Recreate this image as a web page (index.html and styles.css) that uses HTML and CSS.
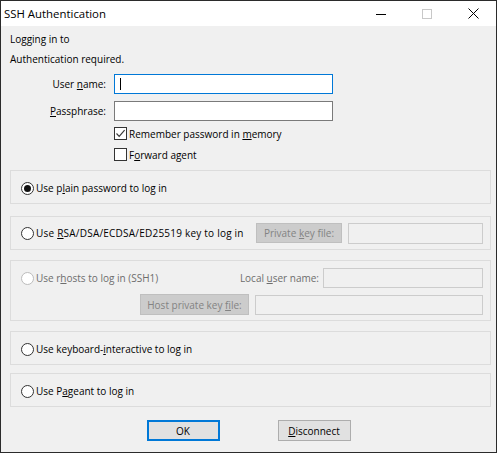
FILE: index.html
```html
<!DOCTYPE html>
<html>
<head>
<meta charset="utf-8">
<link rel="stylesheet" href="styles.css">
</head>
<body>
<div class="window">
  <div class="titlebar">
    <span class="title">SSH Authentication</span>
    <div class="ctl"><svg width="10" height="10" viewBox="0 0 10 10"><path d="M0 5.5H10" stroke="#000" stroke-width="1"/></svg></div>
    <div class="ctl"><svg width="10" height="10" viewBox="0 0 10 10"><rect x="0.5" y="0.5" width="9" height="9" fill="none" stroke="#c8c8c8" stroke-width="1"/></svg></div>
    <div class="ctl"><svg width="11" height="11" viewBox="0 0 11 11"><path d="M0.5 0.5L10.5 10.5M10.5 0.5L0.5 10.5" stroke="#000" stroke-width="1"/></svg></div>
  </div>
  <div class="content">
    <div class="line">Logging in to</div>
    <div class="line line2">Authentication required.</div>
    <div class="field field1">
      <span class="flabel">User <u>n</u>ame:</span>
      <div class="input focus"><span class="caret"></span></div>
    </div>
    <div class="field field2">
      <span class="flabel"><u>P</u>assphrase:</span>
      <div class="input"></div>
    </div>
    <div class="check check1">
      <span class="cb"><svg width="11" height="11" viewBox="0 0 11 11"><path d="M1.5 5.5L4.2 8.3L9.6 2.2" fill="none" stroke="#3a3a3a" stroke-width="1.2"/></svg></span><span class="clabel">Remember password in <u>m</u>emory</span>
    </div>
    <div class="check check2">
      <span class="cb"></span><span class="clabel">F<u>o</u>rward agent</span>
    </div>

    <div class="group g1">
      <div class="row"><span class="radio on"></span><span class="rlabel">Use p<u>l</u>ain password to log in</span></div>
    </div>

    <div class="group g2">
      <div class="row">
        <span class="radio"></span><span class="rlabel grow wide">Use <u>R</u>SA/DSA/ECDSA/ED25519 key to log in</span>
        <div class="dbtn w86"><span>Private <u>k</u>ey file:</span></div>
        <div class="dinput w135"></div>
      </div>
    </div>

    <div class="group g3">
      <div class="row">
        <span class="radio dis"></span><span class="rlabel grow gray">Use r<u>h</u>osts to log in (SSH1)</span>
        <span class="gray llabel">Local <u>u</u>ser name:</span>
        <div class="dinput w160"></div>
      </div>
      <div class="row row2">
        <div class="dbtn w109"><span>Host private key <u>f</u>ile:</span></div>
        <div class="dinput w228"></div>
      </div>
    </div>

    <div class="group g4">
      <div class="row"><span class="radio"></span><span class="rlabel">Use keyboard-<u>i</u>nteractive to log in</span></div>
    </div>

    <div class="group g5">
      <div class="row"><span class="radio"></span><span class="rlabel">Use P<u>a</u>geant to log in</span></div>
    </div>

    <div class="buttons">
      <div class="btn default"><span>OK</span></div>
      <div class="btn"><span><u>D</u>isconnect</span></div>
    </div>
  </div>
</div>
</body>
</html>
```
FILE: styles.css
```css
html, body {
  margin: 0;
  padding: 0;
  background: #f0f0f0;
}
.window {
  width: 497px;
  height: 453px;
  box-sizing: border-box;
  border: 1px solid #2b2b2b;
  background: #f0f0f0;
  font-family: "Open Sans", "Liberation Sans", sans-serif;
  font-size: 10px;
  color: #000;
  overflow: hidden;
}
u {
  text-decoration: underline;
  text-underline-offset: 1px;
}
.titlebar {
  height: 25px;
  background: #fff;
  display: flex;
  align-items: center;
}
.title {
  flex: 1;
  padding-left: 3px;
  font-size: 11.4px;
  line-height: 25px;
}
.ctl {
  width: 46px;
  height: 25px;
  display: flex;
  align-items: center;
  justify-content: center;
}
.ctl svg { display: block; }
.content {
  padding: 6px 5px 0 9px;
}
.line {
  height: 14px;
  line-height: 14px;
}
.line2 { margin-top: 6px; }
.field {
  display: flex;
  align-items: center;
  height: 20px;
}
.field1 { margin-top: 8px; }
.field2 { margin-top: 7px; }
.flabel {
  width: 96px;
  text-align: right;
  margin-right: 8px;
}
.input {
  width: 219px;
  height: 20px;
  box-sizing: border-box;
  border: 1px solid #7a7a7a;
  background: #fff;
  display: flex;
  align-items: center;
  padding-left: 5px;
}
.input.focus { border-color: #0078d7; }
.caret {
  width: 1px;
  height: 12px;
  background: #000;
}
.check {
  display: flex;
  align-items: center;
  height: 13px;
  padding-left: 104px;
}
.check1 { margin-top: 6px; }
.check2 { margin-top: 8px; }
.cb {
  width: 13px;
  height: 13px;
  box-sizing: border-box;
  border: 1px solid #333;
  background: #fff;
  margin-right: 2px;
  flex: none;
}
.cb svg { display: block; }
.group {
  width: 481px;
  box-sizing: border-box;
  border: 1px solid #dcdcdc;
  height: 34px;
  padding: 10px 7px 0 10px;
}
.g1 { margin-top: 9px; }
.g2 { margin-top: 12px; padding-top: 6px; }
.g3 { margin-top: 10px; padding-top: 7px; height: 61px; }
.g4 { margin-top: 10px; }
.g5 { margin-top: 8px; }
.row {
  display: flex;
  align-items: center;
  min-height: 13px;
}
.g2 .row, .g3 .row { height: 20px; }
.g3 .row2 {
  margin-top: 6px;
  height: 21px;
  justify-content: flex-end;
}
.radio {
  width: 13px;
  height: 13px;
  box-sizing: border-box;
  border: 1px solid #333;
  border-radius: 50%;
  background: #fff;
  margin-right: 2px;
  flex: none;
  display: flex;
  align-items: center;
  justify-content: center;
}
.radio.on::after {
  content: "";
  width: 7px;
  height: 7px;
  border-radius: 50%;
  background: #111;
}
.radio.dis { border-color: #bcbcbc; }
.grow { flex: 1; }
.wide { letter-spacing: 0.22px; }
.gray { color: #6d6d6d; }
.llabel { margin-right: 4px; }
.dbtn {
  height: 20px;
  box-sizing: border-box;
  border: 1px solid #bfbfbf;
  background: #cccccc;
  color: #838383;
  display: flex;
  align-items: center;
  justify-content: center;
  margin-right: 6px;
  flex: none;
}
.g3 .dbtn { height: 21px; }
.dinput {
  height: 20px;
  box-sizing: border-box;
  border: 1px solid #cccccc;
  background: #f0f0f0;
  flex: none;
}
.g2 .dinput { height: 21px; }
.w86 { width: 86px; }
.w109 { width: 109px; }
.w135 { width: 135px; }
.w160 { width: 160px; }
.w228 { width: 228px; }
.buttons {
  margin-top: 13px;
  display: flex;
  justify-content: center;
  gap: 58px;
  padding-right: 4px;
}
.btn {
  width: 73px;
  height: 21px;
  box-sizing: border-box;
  border: 1px solid #adadad;
  background: #e1e1e1;
  display: flex;
  align-items: center;
  justify-content: center;
}
.btn.default { border: 2px solid #0078d7; }
```
